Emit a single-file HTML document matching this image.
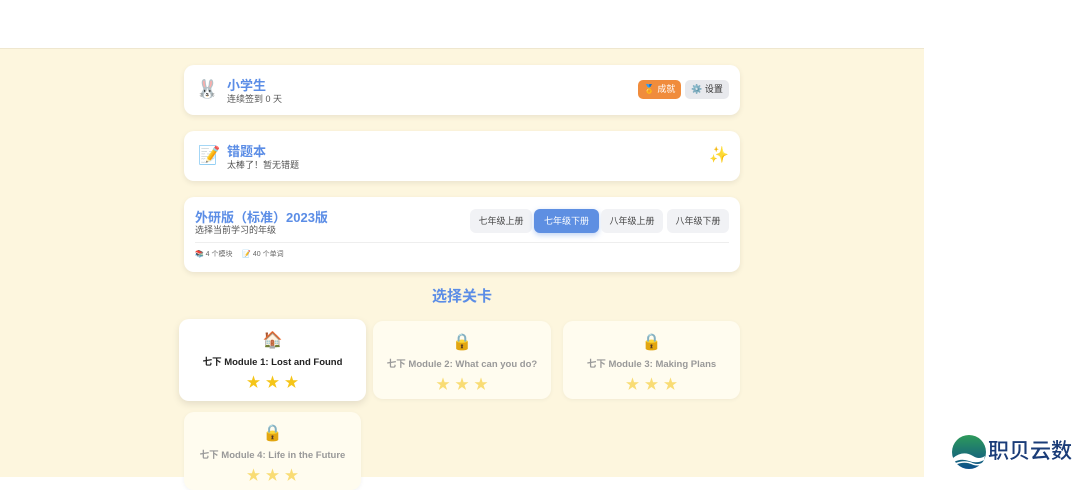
<!DOCTYPE html><html><head><meta charset="utf-8"><style>
*{box-sizing:border-box;margin:0;padding:0}
body{width:1080px;height:477px;overflow:hidden;background:#fff;font-family:"Liberation Sans","Noto Sans CJK SC",sans-serif;position:relative;line-height:1.2}
.main{position:absolute;left:0;top:48px;width:924px;height:429px;background:#fdf6de;border-top:1px solid #efe7cf}
.card{position:absolute;background:#fff;border-radius:10px;box-shadow:0 2px 6px rgba(0,0,0,.08)}
.t{color:#5b8de6;font-weight:bold}
.s{color:#555;font-size:9px}
.btn{position:absolute;border-radius:5px;font-size:9px;display:flex;align-items:center;justify-content:center}
.g{position:absolute;top:12px;height:24px;border-radius:6px;background:#f1f2f5;color:#444;font-size:9px;display:flex;align-items:center;justify-content:center}
.lv{position:absolute;border-radius:10px;text-align:center;background:#fffcef;box-shadow:0 1px 4px rgba(0,0,0,.05)}
.lv .i{font-size:16px;margin-top:11px;height:22px;line-height:22px}
.lv .n{font-size:9.5px;font-weight:bold;color:#999;margin-top:5px;height:12px}
.lv .st{color:#f9dc74;font-size:14px;letter-spacing:5px;margin-top:5px;line-height:16px;padding-left:5px}
</style></head><body>
<div class="main">
<div class="card" style="left:184px;top:16px;width:556px;height:50px">
 <div style="position:absolute;left:12px;top:14px;font-size:18px">🐰</div>
 <div class="t" style="position:absolute;left:43px;top:13px;font-size:13px">小学生</div>
 <div class="s" style="position:absolute;left:43px;top:29px">连续签到 0 天</div>
 <div class="btn" style="left:454px;top:15px;width:43px;height:19px;background:#f08c3c;color:#fff">🏅 成就</div>
 <div class="btn" style="left:501px;top:15px;width:44px;height:19px;background:#e8e9ed;color:#333">⚙️ 设置</div>
</div>
<div class="card" style="left:184px;top:82px;width:556px;height:50px">
 <div style="position:absolute;left:14px;top:14px;font-size:18px">📝</div>
 <div class="t" style="position:absolute;left:43px;top:13px;font-size:13px">错题本</div>
 <div class="s" style="position:absolute;left:43px;top:29px">太棒了！暂无错题</div>
 <div style="position:absolute;left:525px;top:15px;font-size:16px">✨</div>
</div>
<div class="card" style="left:184px;top:148px;width:556px;height:75px">
 <div class="t" style="position:absolute;left:11px;top:13px;font-size:13px">外研版（标准）2023版</div>
 <div class="s" style="position:absolute;left:11px;top:28px">选择当前学习的年级</div>
 <div class="g" style="left:286px;width:62px">七年级上册</div>
 <div class="g" style="left:350px;width:65px;background:#5e8fe2;color:#fff;box-shadow:0 2px 6px rgba(94,143,226,.4)">七年级下册</div>
 <div class="g" style="left:417px;width:62px">八年级上册</div>
 <div class="g" style="left:483px;width:62px">八年级下册</div>
 <div style="position:absolute;left:11px;right:11px;top:45px;border-top:1px solid #eee"></div>
 <div style="position:absolute;left:11px;top:54px;font-size:7px;color:#666">📚 4 个模块 &nbsp;&nbsp;&nbsp;&nbsp;📝 40 个单词</div>
</div>
<div class="t" style="position:absolute;left:0;width:924px;text-align:center;top:239px;font-size:15px">选择关卡</div>
<div class="lv" style="left:179px;top:270px;width:187px;height:82px;background:#fff;box-shadow:0 3px 8px rgba(0,0,0,.1)">
 <div class="i">🏠</div><div class="n" style="color:#222">七下 Module 1: Lost and Found</div><div class="st" style="color:#f5c518">★★★</div></div>
<div class="lv" style="left:373px;top:272px;width:178px;height:78px">
 <div class="i">🔒</div><div class="n">七下 Module 2: What can you do?</div><div class="st">★★★</div></div>
<div class="lv" style="left:563px;top:272px;width:177px;height:78px">
 <div class="i">🔒</div><div class="n">七下 Module 3: Making Plans</div><div class="st">★★★</div></div>
<div class="lv" style="left:184px;top:363px;width:177px;height:78px">
 <div class="i">🔒</div><div class="n">七下 Module 4: Life in the Future</div><div class="st">★★★</div></div>
</div>
<svg style="position:absolute;left:951px;top:434px" width="36" height="36" viewBox="0 0 36 36"><defs><linearGradient id="a" x1="0" y1="0" x2="0" y2="1"><stop offset="0" stop-color="#2e9a5a"/><stop offset="1" stop-color="#0b4f8a"/></linearGradient></defs><circle cx="18" cy="18" r="17" fill="url(#a)"/><path d="M2 24 Q12 16 22 22 Q28 26 34 22 L33 26 Q26 30 18 27 Q10 24 3 28Z" fill="#fff"/><path d="M4 30 Q14 26 22 30 Q28 32 32 29" stroke="#fff" stroke-width="1.5" fill="none"/></svg>
<div style="position:absolute;left:988px;top:438px;font-size:21px;color:#1a3c78;font-family:'Noto Sans CJK SC',sans-serif;font-weight:500">职贝云数</div>
</body></html>
